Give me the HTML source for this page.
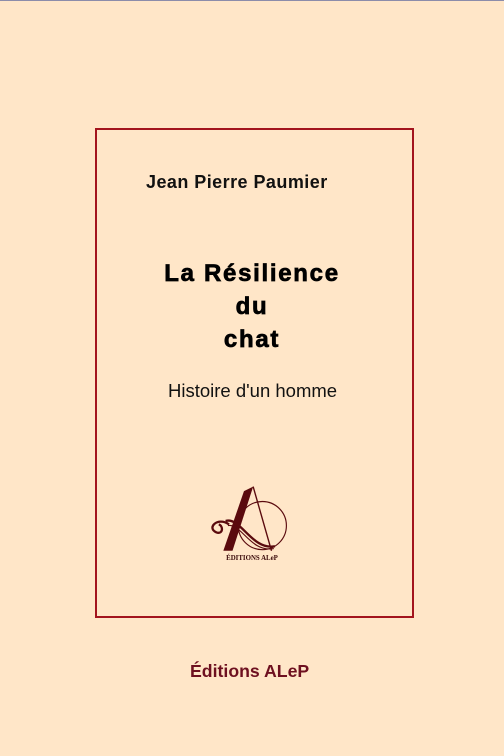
<!DOCTYPE html>
<html><head><meta charset="utf-8"><style>
html,body{margin:0;padding:0}
body{width:504px;height:756px;background:#FFE6C8;position:relative;overflow:hidden;font-family:"Liberation Sans",Arial,sans-serif}
.top{position:absolute;left:0;top:0;width:504px;height:1px;background:#8c8caa}
.box{position:absolute;left:95px;top:128px;width:315px;height:486px;border:2px solid #A3141E}
.t{position:absolute;white-space:nowrap;line-height:1}
</style></head><body>
<div class="top"></div>
<div class="box"></div>
<div class="t" style="left:146px;top:173px;font-size:18px;font-weight:bold;color:#111;letter-spacing:0.45px">Jean Pierre Paumier</div>
<div class="t" style="left:0;width:504px;text-align:center;top:257px;font-size:24px;font-weight:bold;color:#000;-webkit-text-stroke:0.7px #000;line-height:33px;letter-spacing:1.7px">
<div>La Résilience</div><div>du</div><div>chat</div></div>
<div class="t" style="left:168px;top:382px;font-size:18.5px;color:#111">Histoire d'un homme</div>
<svg style="position:absolute;left:200px;top:482px" width="104" height="86" viewBox="0 0 90 75">
<path d="M38 8 L46 4 L28 60 L20 60 Z" fill="#5a0a0e"/>
<path d="M46 4 L62 60" stroke="#5a0a0e" stroke-width="1.2" fill="none"/>
<circle cx="54" cy="38" r="21" stroke="#5a0a0e" stroke-width="1" fill="none"/>
<path d="M25 37 C15 30 5 40 14 44 C20 46 20 38 16 37 M22 34 C35 30 45 60 65 56" stroke="#5a0a0e" stroke-width="2" fill="none"/>
<path d="M24 38 C36 36 44 62 64 58" stroke="#5a0a0e" stroke-width="1" fill="none"/>
<text x="45" y="68" text-anchor="middle" font-family="Liberation Serif,serif" font-size="6" font-weight="bold" fill="#3a0a0a">ÉDITIONS ALeP</text>
</svg>
<div class="t" style="left:190px;top:663px;font-size:17.7px;font-weight:bold;color:#6e1020">Éditions ALeP</div>
</body></html>
